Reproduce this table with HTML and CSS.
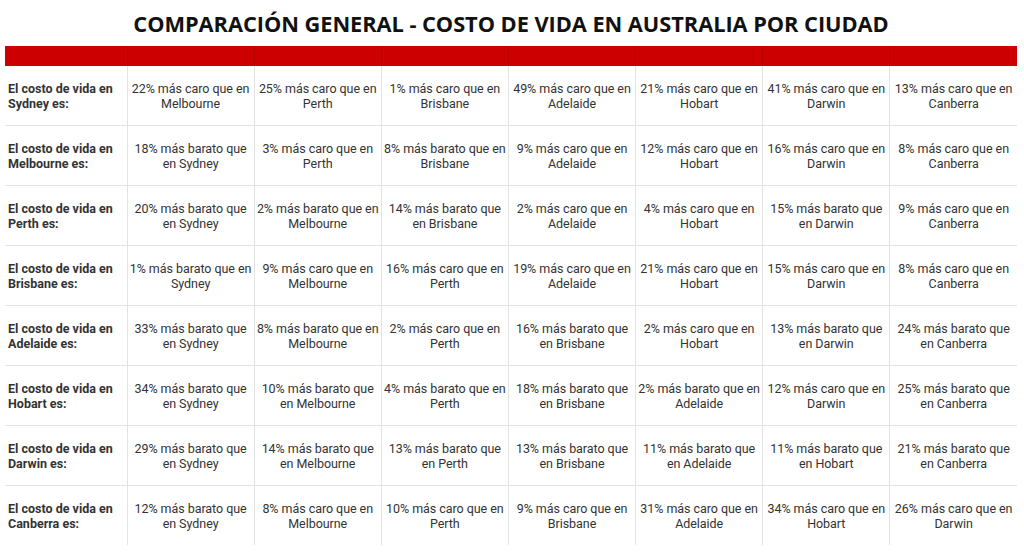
FILE: index.html
```html
<!DOCTYPE html>
<html lang="es">
<head>
<meta charset="utf-8">
<title>Costo de vida en Australia</title>
<link rel="stylesheet" href="styles.css">
</head>
<body>
<h1 class="title">COMPARACIÓN GENERAL - COSTO DE VIDA EN AUSTRALIA POR CIUDAD</h1>
<table class="grid">
<colgroup><col class="c-first"><col><col><col><col><col><col><col></colgroup>
<thead><tr class="head"><th></th><th></th><th></th><th></th><th></th><th></th><th></th><th></th></tr></thead>
<tbody>
<tr><th>El costo de vida en Sydney es:</th><td>22% más caro que en Melbourne</td><td>25% más caro que en Perth</td><td>1% más caro que en Brisbane</td><td>49% más caro que en Adelaide</td><td>21% más caro que en Hobart</td><td>41% más caro que en Darwin</td><td>13% más caro que en Canberra</td></tr>
<tr><th>El costo de vida en Melbourne es:</th><td>18% más barato que en Sydney</td><td>3% más caro que en Perth</td><td>8% más barato que en Brisbane</td><td>9% más caro que en Adelaide</td><td>12% más caro que en Hobart</td><td>16% más caro que en Darwin</td><td>8% más caro que en Canberra</td></tr>
<tr><th>El costo de vida en Perth es:</th><td>20% más barato que en Sydney</td><td>2% más barato que en Melbourne</td><td>14% más barato que en Brisbane</td><td>2% más caro que en Adelaide</td><td>4% más caro que en Hobart</td><td>15% más barato que en Darwin</td><td>9% más caro que en Canberra</td></tr>
<tr><th>El costo de vida en Brisbane es:</th><td>1% más barato que en Sydney</td><td>9% más caro que en Melbourne</td><td>16% más caro que en Perth</td><td>19% más caro que en Adelaide</td><td>21% más caro que en Hobart</td><td>15% más caro que en Darwin</td><td>8% más caro que en Canberra</td></tr>
<tr><th>El costo de vida en Adelaide es:</th><td>33% más barato que en Sydney</td><td>8% más barato que en Melbourne</td><td>2% más caro que en Perth</td><td>16% más barato que en Brisbane</td><td>2% más caro que en Hobart</td><td>13% más barato que en Darwin</td><td>24% más barato que en Canberra</td></tr>
<tr><th>El costo de vida en Hobart es:</th><td>34% más barato que en Sydney</td><td>10% más barato que en Melbourne</td><td>4% más barato que en Perth</td><td>18% más barato que en Brisbane</td><td>2% más barato que en Adelaide</td><td>12% más caro que en Darwin</td><td>25% más barato que en Canberra</td></tr>
<tr><th>El costo de vida en Darwin es:</th><td>29% más barato que en Sydney</td><td>14% más barato que en Melbourne</td><td>13% más barato que en Perth</td><td>13% más barato que en Brisbane</td><td>11% más barato que en Adelaide</td><td>11% más barato que en Hobart</td><td>21% más barato que en Canberra</td></tr>
<tr><th>El costo de vida en Canberra es:</th><td>12% más barato que en Sydney</td><td>8% más caro que en Melbourne</td><td>10% más caro que en Perth</td><td>9% más caro que en Brisbane</td><td>31% más caro que en Adelaide</td><td>34% más caro que en Hobart</td><td>26% más caro que en Darwin</td></tr>
</tbody>
</table>
</body>
</html>
```
FILE: styles.css
```css
html, body { margin: 0; padding: 0; background: #fff; }
body { padding: 0 7px 0 5px; }
.title {
  margin: 0;
  padding: 10px 0 8px;
  text-align: center;
  font-family: "Open Sans", sans-serif;
  font-weight: 700;
  font-size: 21.8px;
  line-height: 28px;
  color: #111;
  letter-spacing: -0.05px;
}
.grid {
  width: 1012px;
  border-collapse: collapse;
  table-layout: fixed;
  font-family: Roboto, sans-serif;
  font-size: 12.5px;
  line-height: 15px;
  color: #333;
  letter-spacing: -0.05px;
}
.c-first { width: 122px; }
.grid .head th {
  height: 20px;
  padding: 0;
  background: #cc0000;
  border-left: 1px solid #b80000;
}
.grid .head th:first-child { border-left: none; }
.grid tbody th, .grid tbody td {
  height: 59px;
  padding: 0;
  border-bottom: 1px solid #e3e3e3;
  border-left: 1px solid #e3e3e3;
  vertical-align: middle;
}
.grid tbody th {
  border-left: none;
  text-align: left;
  font-weight: 700;
  padding-left: 3px;
  letter-spacing: 0;
}
.grid tbody td { text-align: center; }
.grid tbody tr:last-child th, .grid tbody tr:last-child td { border-bottom: none; }
```
